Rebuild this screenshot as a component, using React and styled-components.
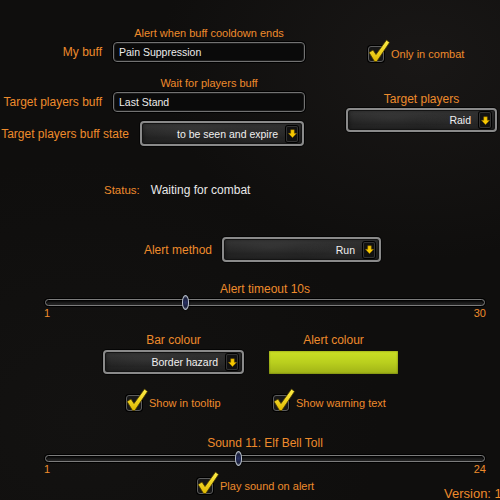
import React from 'react';
import styled, { createGlobalStyle } from 'styled-components';

const ORANGE = '#ee8b2c';
const FONT = '"Liberation Sans", Arial, sans-serif';

const GlobalStyle = createGlobalStyle`
  html, body { margin: 0; padding: 0; background: #0f0e0d; }
  body { font-family: ${FONT}; }
`;

const Panel = styled.div`
  width: 500px;
  height: 500px;
  overflow: hidden;
  position: relative;
  display: flex;
  flex-direction: column;
  font-family: ${FONT};
  background:
    radial-gradient(ellipse 260px 200px at 420px 60px, #191716 0%, rgba(25,23,22,0) 100%),
    radial-gradient(ellipse 300px 260px at 80px 420px, #131211 0%, rgba(19,18,17,0) 100%),
    #0f0e0d;
`;

const TopSection = styled.div`
  display: flex;
`;

const Column = styled.div`
  display: flex;
  flex-direction: column;
  width: ${p => p.$w}px;
  margin-left: ${p => p.$ml || 0}px;
  flex-shrink: 0;
`;

const Caption = styled.div`
  color: ${ORANGE};
  font-size: ${p => p.$size || 11}px;
  line-height: 14px;
  text-align: center;
  white-space: nowrap;
  margin-top: ${p => p.$mt || 0}px;
  margin-left: ${p => p.$ml || 0}px;
  width: ${p => (p.$w ? `${p.$w}px` : 'auto')};
`;

const FieldRow = styled.div`
  display: flex;
  align-items: center;
  gap: ${p => p.$gap || 11}px;
  margin-top: ${p => p.$mt || 0}px;
`;

const Label = styled.div`
  width: ${p => p.$w}px;
  flex-shrink: 0;
  text-align: right;
  color: ${ORANGE};
  font-size: 12px;
  white-space: nowrap;
`;

const TextInput = styled.div`
  width: 192px;
  height: 20px;
  box-sizing: border-box;
  border: 1.5px solid #727272;
  border-radius: 4px;
  background: #0a0a0a;
  box-shadow: 0 0 0 1px #000, inset 0 0 0 1px #1c1c1c;
  color: #ececec;
  font-size: 10.5px;
  padding-left: 5px;
  display: flex;
  align-items: center;
  white-space: nowrap;
`;

const DropdownBox = styled.div`
  width: ${p => p.$w}px;
  height: ${p => p.$h || 25}px;
  box-sizing: border-box;
  border: 2px solid #8a8a8a;
  border-radius: 4px;
  background:
    radial-gradient(ellipse 40% 60% at 30% 40%, rgba(255,255,255,0.05), rgba(255,255,255,0) 100%),
    radial-gradient(ellipse 30% 50% at 75% 60%, rgba(255,255,255,0.04), rgba(255,255,255,0) 100%),
    linear-gradient(180deg, #3c3c3c 0%, #2b2b2b 30%, #202020 70%, #282828 100%);
  box-shadow: 0 0 0 1px #050505, inset 0 0 0 1px #141414, inset 0 0 5px rgba(0,0,0,0.7);
  display: flex;
  align-items: center;
  justify-content: flex-end;
  gap: 8px;
  padding-right: 4px;
  margin-top: ${p => p.$mt || 0}px;
  flex-shrink: 0;
`;

const DropdownText = styled.span`
  color: #f0f0f0;
  font-size: 10.5px;
  white-space: nowrap;
`;

const ArrowButton = styled.span`
  width: 12px;
  height: 16px;
  background: #111;
  border-radius: 2px;
  box-shadow: inset 0 0 0 1px #333, 0 0 0 1px #000;
  display: flex;
  align-items: center;
  justify-content: center;
`;

const Dropdown = ({ w, h, mt, value }) => (
  <DropdownBox $w={w} $h={h} $mt={mt}>
    <DropdownText>{value}</DropdownText>
    <ArrowButton>
      <svg width="9" height="9" viewBox="0 0 10 10">
        <path d="M3 0.8h4v4h2.6L5 9.6 0.4 4.8H3z" fill="#f6c800" stroke="#7a5a00" strokeWidth="0.5" />
      </svg>
    </ArrowButton>
  </DropdownBox>
);

const CheckItem = styled.div`
  display: flex;
  align-items: center;
  gap: 7px;
  margin-top: ${p => p.$mt || 0}px;
  margin-left: ${p => p.$ml || 0}px;
  width: ${p => (p.$w ? `${p.$w}px` : 'auto')};
  flex-shrink: 0;
  color: ${ORANGE};
  font-size: 11px;
  white-space: nowrap;
`;

const Box = styled.span`
  position: relative;
  width: 16px;
  height: 16px;
  box-sizing: border-box;
  border: 1.5px solid #5c5c5c;
  border-radius: 3px;
  background: #171717;
  box-shadow: 0 0 0 1px #000;
  flex-shrink: 0;
`;

const Tick = styled.svg`
  position: absolute;
  left: -1px;
  top: -7px;
  width: 22px;
  height: 22px;
  overflow: visible;
`;

const Check = ({ label, ml, mt, w }) => (
  <CheckItem $ml={ml} $mt={mt} $w={w}>
    <Box>
      <Tick viewBox="0 0 22 22">
        <defs>
          <linearGradient id="tickG" x1="0" y1="0" x2="0" y2="1">
            <stop offset="0" stopColor="#fff04a" />
            <stop offset="1" stopColor="#e0b800" />
          </linearGradient>
        </defs>
        <path
          d="M1 12.5 L5 10 L8 14.5 L18.5 0 L21.5 2.5 L8.8 21.5 L6.5 21.5 Z"
          fill="url(#tickG)"
          stroke="#4a3b00"
          strokeWidth="0.8"
          strokeLinejoin="round"
        />
      </Tick>
    </Box>
    <span>{label}</span>
  </CheckItem>
);

const StatusRow = styled.div`
  display: flex;
  align-items: center;
  gap: 11px;
  margin-top: 36px;
  padding-left: 104px;
  line-height: 16px;
`;

const StatusKey = styled.span`
  color: ${ORANGE};
  font-size: 11.5px;
`;

const StatusValue = styled.span`
  color: #e8e8e8;
  font-size: 12px;
`;

const SliderBlock = styled.div`
  display: flex;
  flex-direction: column;
  margin-left: 44px;
  width: 442px;
  margin-top: ${p => p.$mt || 0}px;
`;

const Track = styled.div`
  position: relative;
  margin: ${p => p.$mt || 0}px 1px 0 1px;
  height: 7px;
  box-sizing: border-box;
  border: 1px solid #7c7c7c;
  border-radius: 4px;
  background: linear-gradient(180deg, #0c0c0c, #262626);
  box-shadow: 0 0 0 1px #000, inset 0 1px 2px #000;
`;

const Thumb = styled.span`
  position: absolute;
  top: -5px;
  width: 7px;
  height: 15px;
  margin-left: -4px;
  box-sizing: border-box;
  border: 1.5px solid #b8c0cc;
  border-radius: 50% / 45%;
  background: radial-gradient(circle at 50% 50%, #2a3366 0%, #1a1f3c 60%, #6f7688 100%);
  box-shadow: 0 0 2px #000;
`;

const RangeRow = styled.div`
  display: flex;
  justify-content: space-between;
  color: ${ORANGE};
  font-size: 11px;
  line-height: 12px;
  margin-top: 1px;
`;

const Slider = ({ title, min, max, value, mt, trackMt }) => {
  const pct = (value - min) / (max - min);
  return (
    <SliderBlock $mt={mt}>
      <Caption $size={12}>{title}</Caption>
      <Track $mt={trackMt}>
        <Thumb style={{ left: `${9 + pct * 423}px` }} />
      </Track>
      <RangeRow>
        <span>{min}</span>
        <span>{max}</span>
      </RangeRow>
    </SliderBlock>
  );
};

const ColourSection = styled.div`
  display: flex;
  gap: 25px;
  padding-left: 103px;
  margin-top: 14px;
`;

const ColourColumn = styled.div`
  width: ${p => p.$w}px;
  display: flex;
  flex-direction: column;
  align-items: center;
`;

const Swatch = styled.div`
  width: 100%;
  height: 23px;
  margin-top: 4px;
  background: linear-gradient(180deg, #cbe024 0%, #b9cf1e 50%, #9fb116 100%);
  box-shadow: inset 0 0 2px rgba(0,0,0,0.5);
`;

const CheckRow = styled.div`
  display: flex;
  padding-left: ${p => p.$pl}px;
  margin-top: ${p => p.$mt}px;
  align-items: flex-start;
`;

const Version = styled.div`
  color: ${ORANGE};
  font-size: 13px;
  line-height: 16px;
  margin-top: 8px;
  white-space: nowrap;
  flex-shrink: 0;
`;

export default function App() {
  return (
    <>
      <GlobalStyle />
      <Panel>
        <TopSection>
          <Column $w={310}>
            <Caption $mt={26} $ml={113} $w={192}>Alert when buff cooldown ends</Caption>
            <FieldRow $mt={2}>
              <Label $w={102}>My buff</Label>
              <TextInput>Pain Suppression</TextInput>
            </FieldRow>
            <Caption $mt={14} $ml={113} $w={192}>Wait for players buff</Caption>
            <FieldRow $mt={2}>
              <Label $w={102}>Target players buff</Label>
              <TextInput>Last Stand</TextInput>
            </FieldRow>
            <FieldRow $mt={9}>
              <Label $w={129}>Target players buff state</Label>
              <Dropdown w={164} h={25} value="to be seen and expire" />
            </FieldRow>
          </Column>
          <Column $w={151} $ml={36}>
            <Check label="Only in combat" ml={22} mt={46} />
            <Caption $mt={30} $size={12}>Target players</Caption>
            <Dropdown w={151} h={24} mt={2} value="Raid" />
          </Column>
        </TopSection>

        <StatusRow>
          <StatusKey>Status:</StatusKey>
          <StatusValue>Waiting for combat</StatusValue>
        </StatusRow>

        <FieldRow $mt={39} $gap={10}>
          <Label $w={212}>Alert method</Label>
          <Dropdown w={159} h={25} value="Run" />
        </FieldRow>

        <Slider title="Alert timeout 10s" min={1} max={30} value={10} mt={20} trackMt={3} />

        <ColourSection>
          <ColourColumn $w={141}>
            <Caption $size={12}>Bar colour</Caption>
            <Dropdown w={141} h={24} mt={3} value="Border hazard" />
          </ColourColumn>
          <ColourColumn $w={129}>
            <Caption $size={12}>Alert colour</Caption>
            <Swatch />
          </ColourColumn>
        </ColourSection>

        <CheckRow $pl={126} $mt={21}>
          <Check label="Show in tooltip" w={147} />
          <Check label="Show warning text" />
        </CheckRow>

        <Slider title="Sound 11: Elf Bell Toll" min={1} max={24} value={11} mt={25} trackMt={5} />

        <CheckRow $pl={197} $mt={3}>
          <Check label="Play sound on alert" w={247} />
          <Version>Version: 10.2.5</Version>
        </CheckRow>
      </Panel>
    </>
  );
}
